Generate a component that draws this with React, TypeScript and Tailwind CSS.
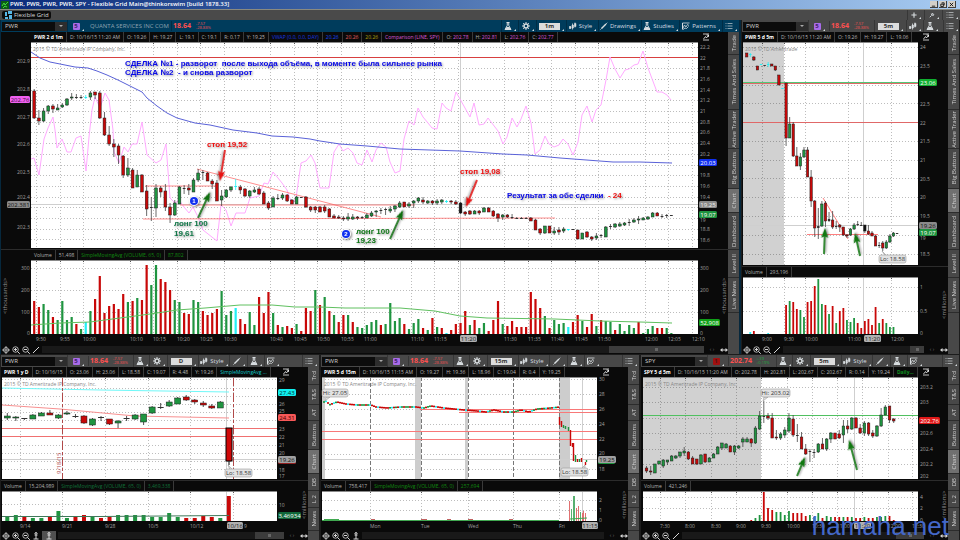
import { ReactNode, useState } from 'react';
import clsx from 'clsx';

const RED = '#c80808';
const GREEN = '#1f9440';
const COLORS: Record<string, string> = { r: RED, g: GREEN, c: '#22f0f5', k: '#111111', d: '#333333' };

/* ---------- data: "<kind> top bottom high low" per candle, "<kind><height>" per volume bar ---------- */

const MAIN_CANDLES = `r 91 118 89 119;r 118 121 110 125;g 111 121 108 122;g 106 111 105 114;r 106 109 104 113;g 108 110 104 110;g 105 107 103 108;g 99 105 98 106;g 97 98 93 100;d 97 98 94 99;d 97 98 95 99;c 97 98 95 99;g 93 97 91 100;r 92 95 92 99;r 93 118 91 119;r 118 135 112 136;r 135 144 126 146;r 144 147 139 157;r 146 155 144 164;r 156 175 155 178;g 168 175 158 177;r 170 188 168 188;g 175 187 170 187;r 175 192 174 192;r 191 209 185 216;d 207 208 197 221;g 188 208 184 217;r 188 192 186 197;r 191 207 184 211;r 207 215 203 223;g 203 215 200 216;g 187 204 186 204;d 188 189 185 194;r 188 190 184 195;g 180 192 178 192;g 173 180 169 182;d 172 173 170 180;r 173 181 172 181;r 181 184 179 189;r 183 201 180 201;g 196 200 190 206;g 190 197 189 198;g 187 190 186 192;c 186 187 179 190;r 187 190 185 194;r 189 196 188 197;g 191 196 190 198;g 190 192 187 193;r 189 194 187 195;r 193 204 191 204;r 203 208 201 210;g 198 207 196 207;d 198 199 194 200;g 195 198 193 200;r 195 201 194 202;r 200 204 199 204;g 197 204 196 204;d 197 198 197 198;r 197 207 196 208;r 207 210 206 212;r 207 210 206 213;r 207 212 206 212;r 207 211 205 213;r 209 217 208 217;r 216 218 214 218;r 217 218 215 219;r 218 219 216 221;g 217 219 213 221;g 217 219 214 220;r 217 218 216 220;d 217 218 216 219;g 215 218 213 218;g 213 216 211 217;g 211 212 210 217;d 210 211 208 214;d 209 210 208 215;g 209 211 206 213;g 206 209 205 212;g 203 207 201 208;r 202 207 202 207;g 204 206 202 208;g 201 203 200 208;g 198 201 197 203;r 200 202 197 204;g 201 203 200 204;r 201 203 200 205;g 201 203 199 205;g 200 202 199 204;c 201 202 200 203;r 201 202 200 204;r 202 204 200 205;k 203 213 202 214;r 212 214 211 216;r 211 214 210 215;g 211 214 210 214;r 211 213 210 215;g 208 212 207 212;r 208 212 207 212;r 211 216 210 217;r 214 218 213 222;g 215 217 214 220;r 215 217 214 218;d 217 218 214 219;d 218 219 217 219;d 218 219 217 219;d 218 219 217 219;r 218 221 217 221;r 220 230 219 230;r 229 233 228 235;g 226 233 226 234;r 226 233 226 233;g 231 233 227 235;r 230 232 227 235;g 229 231 227 233;c 229 230 229 231;d 229 230 229 230;r 230 239 230 239;g 233 239 233 239;r 232 237 231 238;r 237 239 236 241;g 236 238 233 240;d 235 236 234 238;g 227 237 226 237;d 226 227 224 229;g 224 227 223 228;g 224 226 222 227;g 223 225 222 226;d 222 223 219 226;g 220 222 218 223;g 219 220 216 224;g 218 220 217 220;g 217 219 216 220;g 213 217 212 217;r 213 216 212 216;d 216 217 214 218;d 215 216 214 218;d 215 216 215 216`;

const MAIN_VOLUME =
  'r33 r27 g30 g24 r17 g14 g33 g14 g17 r10 g5 c12 g23 r35 r58 r21 r28 r30 r25 r40 g32 r33 g36 r34 r69 g49 g69 r55 r52 r44 g34 g32 r21 r20 g34 g32 r23 r19 r21 r25 g43 g19 g23 c26 r15 r10 g22 g9 r37 r21 r42 g21 r9 g7 r8 r6 g10 r3 r26 r23 g44 r29 g37 r23 g19 r12 r19 g19 r12 g7 g6 g9 g12 g14 r9 g10 g31 g13 g16 r10 g5 g11 g15 r6 g4 r16 g7 r6 c1 r4 r10 r11 r23 g9 r14 g6 g11 r3 r14 r33 g10 r8 r13 r7 r7 r7 r42 r35 r26 g18 r6 g14 g10 g11 c7 r12 r19 g13 r7 r20 g8 r14 g13 g12 r4 g10 g3 g9 g6 r12 g1 g5 g8 r6 r6 g6 g1';

const COMPARISON =
  '31,159 34,158 39,175 44,139 48,128 53,117 55,130 57,148 62,139 67,152 71,152 76,138 81,136 86,171 89,137 92,110 95,97 100,108 105,93 109,100 113,130 114,152 119,163 124,147 128,152 132,144 137,144 142,122 147,155 156,163 161,160 166,144 170,198 175,203 179,200 184,207 189,213 193,207 198,217 203,230 217,241 221,205 226,210 231,226 236,213 245,213 250,198 259,196 264,183 268,184 273,172 278,178 282,183 287,190 292,204 296,198 301,163 306,161 311,155 315,163 320,188 329,188 334,152 339,144 343,151 348,148 353,153 357,163 362,165 367,150 372,162 376,150 381,143 386,147 390,162 395,173 400,171 404,139 409,121 414,125 418,108 423,117 428,123 432,128 437,129 442,103 446,108 451,111 456,92 460,99 465,108 470,117 474,103 479,125 484,124 488,118 498,131 503,144 507,137 512,118 517,127 521,119 526,106 531,123 535,154 540,150 545,136 549,144 554,147 559,145 563,139 568,144 573,155 578,142 582,115 587,106 592,122 596,110 601,105 606,80 610,57 615,69 620,78 625,70 629,69 634,65 638,64 643,51 648,68 657,92 662,92 667,95 671,100';

const VWAP =
  '31,52 40,58 50,62 60,64 75,67 88,68 97,71 107,75 118,80 130,86 142,92 147,98 157,106 167,113 177,118 195,123 210,125 233,130 257,133 272,136 293,137 310,139 320,141 340,144 367,146 400,149 460,151 503,154 527,155 560,158 613,162 640,162 672,163';

const MAIN_SMA =
  '31,325 60,323 90,322 120,318 150,314 177,310 205,308 240,305 272,305 295,307 320,307 345,308 400,308 435,311 460,316 487,318 555,319 600,321 640,322 672,323';

const FIVE_CANDLES = `r 53 57 53 57;c 54 55 53 57;r 57 60 56 61;r 66 70 66 70;c 64 65 64 65;d 65 66 65 66;c 64 65 62 67;r 64 66 64 66;r 66 70 66 71;r 75 85 75 85;c 88 89 88 89;r 83 138 83 146;g 124 138 117 138;r 124 156 122 157;r 156 166 147 166;g 157 166 153 170;g 150 157 147 158;r 150 177 147 177;r 177 201 170 207;r 201 228 200 237;d 226 228 208 239;g 204 226 201 227;r 203 221 201 227;d 219 221 212 222;r 220 227 211 229;d 226 227 221 229;r 225 227 224 232;r 227 235 227 236;r 235 236 234 238;g 229 235 228 236;g 225 229 223 230;d 224 225 221 226;d 225 226 222 226;k 225 231 225 233;r 231 234 225 235;r 233 236 231 236;r 236 246 235 246;d 245 246 242 248;r 243 248 241 251;g 242 248 240 249;g 236 242 234 243;g 233 236 232 237;d 233 234 233 234`;
const FIVE_VOLUME =
  'g0 c2 r3 g0 g0 g0 c1 g0 g0 g0 g0 r29 g33 r32 r25 g24 g17 r32 r33 r48 g55 g30 r29 g20 r28 g11 r23 r26 g14 g12 g16 r11 r6 r13 r15 r9 r27 g11 r15 g11 g7 g7';

const DAY_CANDLES = `g 416 418 413 420;g 417 418 416 421;d 418 419 418 420;g 415 419 414 419;g 413 416 412 416;r 413 415 410 415;g 415 418 414 419;g 413 414 411 415;d 416 417 414 418;r 416 423 415 424;g 419 425 418 426;d 417 418 416 421;r 419 424 419 425;g 421 423 420 428;d 418 419 416 421;g 415 419 414 420;g 414 422 414 425;g 407 413 406 414;d 407 408 403 409;g 402 406 400 407;g 398 404 397 404;r 397 400 395 401;r 400 402 399 404;r 403 405 401 407;r 406 408 404 409;g 402 408 401 408`;
const DAY_VOLUME = 'g4 g6 r4 g3 g3 r4 g10 g3 r4 r6 g4 r3 r4 g6 g6 g6 g6 g4 g4 g8 g4 r3 r3 r5 r4 g3 r25';

const SPY_CANDLES = `r 468 471 466 473;r 471 472 466 475;g 464 473 464 473;g 461 464 461 464;g 460 466 459 468;g 460 462 460 465;g 456 461 455 461;g 456 458 455 459;g 452 456 452 458;g 451 453 447 456;r 452 459 451 460;r 458 464 456 464;r 459 464 459 465;g 455 464 454 464;r 454 462 454 463;g 458 462 457 462;g 454 458 453 458;g 447 454 446 454;g 443 448 443 450;g 444 448 443 448;r 446 452 445 452;g 446 452 445 455;g 446 448 445 449;g 439 442 437 447;g 439 442 437 442;r 439 443 438 447;g 428 443 426 444;g 416 429 411 430;d 416 417 401 423;r 416 418 413 420;r 418 438 413 438;r 437 438 430 440;g 434 438 432 440;g 430 435 427 438;g 418 431 413 433;r 419 435 415 437;d 435 436 424 442;r 437 449 432 449;r 449 454 444 455;d 451 452 449 462;d 452 453 449 458;g 444 452 443 453;r 444 449 438 449;g 439 449 438 451;g 433 439 432 443;r 433 439 433 439;r 434 438 430 439;g 426 435 420 443;r 426 429 420 433;g 418 429 417 430;r 418 428 417 428;r 428 433 424 434;g 423 433 421 436;r 423 434 422 436;r 433 436 430 438;g 426 436 425 437;g 415 426 408 427;g 407 415 405 415;r 406 420 406 423;r 419 421 418 423`;
const SPY_VOLUME =
  'g0 g0 g0 g0 g0 g0 g0 g0 g0 g0 g0 g0 g0 g0 g0 g0 g0 g0 g0 g0 g0 g0 g0 g0 g0 r1 g3 g6 r29 r13 r11 g9 g9 g6 g10 r8 r8 r8 r5 g6 g4 g8 r3 g5 g4 r4 r4 g4 r4 g4 r3 r3 g4 r3 r3 g4 g4 g5 r5 r1';

/* ---------- chart pieces ---------- */

function Candles({ data, x0, step, width, wick = '#444' }: { data: string; x0: number; step: number; width: number; wick?: string }) {
  return (
    <g>
      {data.split(';').map((row, i) => {
        const [kind, ...v] = row.split(' ');
        const [top, bottom, high, low] = v.map(Number);
        const x = x0 + i * step;
        const flat = kind === 'c' || kind === 'd';
        return (
          <g key={i}>
            <line x1={x} x2={x} y1={high} y2={low} stroke={kind === 'c' ? COLORS.c : wick} strokeWidth="0.8" />
            <rect
              x={x - width / 2}
              y={top}
              width={width}
              height={Math.max(bottom - top, 1)}
              fill={COLORS[kind]}
              stroke={flat ? 'none' : '#1c1c1c'}
              strokeWidth="0.5"
            />
          </g>
        );
      })}
    </g>
  );
}

function VolumeBars({ data, x0, step, width, base }: { data: string; x0: number; step: number; width: number; base: number }) {
  return (
    <g>
      {data.split(' ').map((bar, i) => {
        const h = Number(bar.slice(1));
        return h > 0 && <rect key={i} x={x0 + i * step - width / 2} y={base - h} width={width} height={h} fill={COLORS[bar[0]]} />;
      })}
    </g>
  );
}

type Box = { left: number; right: number; top: number; bottom: number };

function Grid({ box, xs, ys }: { box: Box; xs: number[]; ys: number[] }) {
  return (
    <g stroke="#bdbdbd" strokeDasharray="1 2">
      {ys.map((y) => (
        <line key={y} x1={box.left} x2={box.right} y1={y + 0.5} y2={y + 0.5} />
      ))}
      {xs.map((x) => (
        <line key={x} x1={x + 0.5} x2={x + 0.5} y1={box.top} y2={box.bottom} />
      ))}
      {xs.map((x) => (
        <line key={`t${x}`} x1={x + 0.5} x2={x + 0.5} y1={box.top} y2={box.top + 2} stroke="#555" strokeDasharray="none" />
      ))}
    </g>
  );
}

function Plot({ box, xs, ys, children }: { box: Box; xs: number[]; ys: number[]; children?: ReactNode }) {
  return (
    <>
      <rect x={box.left} y={box.top} width={box.right - box.left} height={box.bottom - box.top} fill="#fff" />
      <Grid box={box} xs={xs} ys={ys} />
      {children}
      <path d={`M${box.left} ${box.top + 0.5}H${box.right}`} stroke="#8a8a8a" />
    </>
  );
}

function ScaleLabels({ x, items }: { x: number; items: [string, number][] }) {
  return (
    <g className="fill-[#a0a0a0] text-[5px]">
      {items.map(([label, y]) => (
        <text key={label} x={x} y={y + 2}>{label}</text>
      ))}
    </g>
  );
}

function TimeLabels({ y, items }: { y: number; items: [string, number][] }) {
  return (
    <g className="fill-[#a0a0a0] text-[5px]">
      {items.map(([label, x]) => (
        <text key={label} x={x} y={y}>{label}</text>
      ))}
    </g>
  );
}

function Tag({ x, y, w, fill, color = '#fff', children }: { x: number; y: number; w: number; fill: string; color?: string; children: string }) {
  return (
    <g>
      <rect x={x} y={y - 3} width={w} height={7} rx={1.5} fill={fill} />
      <text x={x + w / 2} y={y + 3} textAnchor="middle" fill={color} className="text-[6px]">{children}</text>
    </g>
  );
}

function Callout({ x, y, w, children }: { x: number; y: number; w: number; children: string }) {
  return (
    <g>
      <rect x={x} y={y} width={w} height={8} rx={2} fill="#e2e2e2" stroke="#9a9a9a" strokeWidth="0.6" />
      <text x={x + w / 2} y={y + 6} textAnchor="middle" className="fill-[#333] text-[6px]">{children}</text>
    </g>
  );
}

function Arrow({ from, to, color }: { from: [number, number]; to: [number, number]; color: string }) {
  const angle = (Math.atan2(to[1] - from[1], to[0] - from[0]) * 180) / Math.PI;
  const len = Math.hypot(to[0] - from[0], to[1] - from[1]);
  return (
    <g transform={`translate(${from[0]} ${from[1]}) rotate(${angle})`} fill={color} stroke={color} className="[filter:drop-shadow(1px_1px_1px_#0007)]">
      <line x1="0" y1="0" x2={len - 7} y2="0" strokeWidth="1.6" />
      <path d={`M${len} 0 L${len - 10} -3.4 L${len - 8} 0 L${len - 10} 3.4Z`} stroke="none" />
    </g>
  );
}

function Note({ x, y, fill, children }: { x: number; y: number; fill: string; children: ReactNode }) {
  return (
    <text x={x} y={y} fill={fill} className="whitespace-pre font-['Liberation_Sans',sans-serif] text-[8px] font-bold [filter:drop-shadow(1px_1px_1px_#0006)]">
      {children}
    </text>
  );
}

function Marker({ x, y, children }: { x: number; y: number; children: string }) {
  return (
    <g className="[filter:drop-shadow(1px_1px_1px_#0007)]">
      <circle cx={x} cy={y} r="5" fill="#fff" />
      <circle cx={x} cy={y} r="4" fill="#1030f0" />
      <text x={x} y={y + 2} textAnchor="middle" className="fill-white font-['Liberation_Sans',sans-serif] text-[6px] font-bold">{children}</text>
    </g>
  );
}

function Copyright({ x, y, children = '2015 © TD Ameritrade IP Company, Inc.' }: { x: number; y: number; children?: string }) {
  return <text x={x} y={y} className="fill-[#868686] text-[5px]">{children}</text>;
}

function Chart({ viewBox, label, children }: { viewBox: string; label: string; children: ReactNode }) {
  return (
    <svg viewBox={viewBox} role="img" aria-label={label} className="block h-auto w-full">
      {children}
    </svg>
  );
}

/* ---------- icons ---------- */

function Icon({ children, className = 'size-2', label }: { children: ReactNode; className?: string; label?: string }) {
  return (
    <svg viewBox="0 0 16 16" className={clsx('shrink-0', className)} fill="none" stroke="currentColor" strokeWidth="2" aria-label={label} aria-hidden={!label}>
      {children}
    </svg>
  );
}

const Flask = () => (
  <Icon><path d="M5 1h6M6.500 1v6L2 15h12L9.500 7V1" /><path d="M5 10h6l2 5H3z" fill="currentColor" stroke="none" /></Icon>
);
const Gear = () => (
  <Icon>
    <circle cx="8" cy="8" r="4" strokeWidth="3" />
    <path d="M8 0v3M8 13v3M0 8h3M13 8h3M2.300 2.300l2 2M11.700 11.700l2 2M13.700 2.300l-2 2M4.300 11.700l-2 2" />
  </Icon>
);
const Sticks = () => (
  <Icon><path d="M2 8v6M7 3v12M12 1v10" strokeWidth="1.500" /><path d="M1 9h3v4H1zM6 6h3v6H6zM11 3h3v6h-3z" fill="currentColor" strokeWidth="1" /></Icon>
);
const Pencil = () => (
  <Icon><path d="M3 13L12 4" strokeWidth="3" /><path d="M12.500 3.500l2-2M1 15l2-2" /></Icon>
);
const Slash = () => (
  <Icon><path d="M2 14L14 2" strokeWidth="2" /></Icon>
);
const Waves = () => (
  <Icon><path d="M1 2h14M2 12l3-6 3 4 3-5 3 2M2 15l4-3 3 1 4-4" strokeWidth="1.600" /><path d="M1 2v13" /></Icon>
);
const Menu = () => (
  <Icon><path d="M1 3h2M5 3h10M1 8h2M5 8h10M1 13h2M5 13h10" strokeWidth="1.600" opacity="0.8" /></Icon>
);
const Cross = () => (
  <Icon><circle cx="8" cy="8" r="5" strokeWidth="1.500" /><path d="M8 0v16M0 8h16" strokeWidth="1.500" /></Icon>
);
const Zoom = ({ plus }: { plus?: boolean }) => (
  <Icon><circle cx="7" cy="7" r="5.500" strokeWidth="1.600" /><path d="M11 11l4.500 4.500M4 7h6" />{plus && <path d="M7 4v6" />}</Icon>
);
const Anchor = () => (
  <Icon><path d="M8 1v13M5 3l3-2 3 2M5 6h6M3 14h10" /></Icon>
);
const Expand = () => (
  <Icon><path d="M2 2h12M2 14h12M3 12l4-5 2 3 4-6M13 8V4H9" strokeWidth="1.500" /></Icon>
);
const Span = () => (
  <Icon><path d="M0 8l5-4v8zM16 8l-5-4v8z" fill="currentColor" stroke="none" /><path d="M3 8h10" /></Icon>
);

/* ---------- panel chrome ---------- */

function Tool({ label, className, children }: { label: string; className: string; children: ReactNode }) {
  return (
    <button type="button" aria-label={label} className={clsx('flex h-full shrink-0 items-center justify-center gap-[2px] border-l border-black/25 text-[#d8dde0]', className)}>
      {children}
      <svg viewBox="0 0 2 2" className="mb-[1px] size-[2px] shrink-0 self-end" aria-hidden="true"><path d="M2 0v2H0z" fill="currentColor" /></svg>
    </button>
  );
}

function TimeFrame({ value, className }: { value: string; className: string }) {
  return (
    <Tool label={`Time frame ${value}`} className={className}>
      <span className="w-[21px] bg-[#dcdcdc] text-center text-[6px] leading-[7px] font-bold text-[#333]">{value}</span>
    </Tool>
  );
}

function SymbolBox({ id, symbol }: { id: string; symbol: string }) {
  return (
    <div className="ml-[1px] flex h-[9px] w-[65px] shrink-0 items-center bg-[#0c0c0c]">
      <select id={id} aria-label="Symbol" defaultValue={symbol} className="h-full min-w-0 flex-1 appearance-none bg-transparent pl-[3px] text-[6px] leading-[9px] text-[#d0d0d0]">
        <option>{symbol}</option>
      </select>
      <span className="flex h-full w-3 items-center justify-center bg-[#2d2d2d]">
        <svg viewBox="0 0 4 2" className="h-[2px] w-1" aria-hidden="true"><path d="M0 0h4L2 2z" fill="#aaa" /></svg>
      </span>
    </div>
  );
}

type Quote = { symbol: string; badge: string; name?: string; last: string; change: string; percent: string; up?: boolean };

function QuoteBar({ id, quote }: { id: string; quote: Quote }) {
  return (
    <>
      <SymbolBox id={id} symbol={quote.symbol} />
      <Tool label="Link colour" className="w-[21px]">
        <span className={clsx('w-[7px] rounded-[1px] text-center text-[6px] leading-[7px] font-bold', quote.up ? 'bg-[#a01010] text-[#501010]' : 'bg-[#a86be8] text-[#40206a]')}>
          {quote.badge}
        </span>
      </Tool>
      {quote.name && <span className="shrink-0 pr-[2px] pl-[2px] text-[6px] text-[#8fa3b0]">{quote.name}</span>}
      <strong className="min-w-[23px] shrink-0 border-l border-black/25 pr-[2px] pl-[1px] text-[7px] font-bold text-[#ff5050]">{quote.last}</strong>
      <span className={clsx('flex w-[22px] shrink-0 flex-col pl-[2px] text-[4px] leading-[4px]', quote.up ? 'text-[#20a840]' : 'text-[#f05050]')}>
        <span>{quote.change}</span>
        <span>{quote.percent}</span>
      </span>
    </>
  );
}

type Cell = { text: string; value?: string; className?: string; valueClassName?: string };

function Strip({ cells, indent, action }: { cells: Cell[]; indent?: boolean; action?: boolean }) {
  return (
    <div className={clsx('flex h-[10px] bg-[#0a0a0a] text-[#b0b0b0]', indent && 'pl-[30px]')}>
      <div className="flex min-w-0 flex-1 overflow-hidden">
        {cells.map((cell, i) => (
          <span key={i} className={clsx('shrink-0 border-r border-[#3a3a3a] px-[3px] text-[5px] leading-[10px] whitespace-nowrap', cell.className)}>
            {cell.text}
            {cell.value && <span className={cell.valueClassName}> {cell.value}</span>}
          </span>
        ))}
      </div>
      <div className="flex w-[30px] shrink-0 items-center pl-1 text-white">
        {action && <button type="button" aria-label="Chart settings"><Expand /></button>}
      </div>
    </div>
  );
}

function SideTabs({ tabs }: { tabs: [string, string][] }) {
  const [active, setActive] = useState('Chart');
  return (
    <nav className="flex w-[11px] shrink-0 flex-col bg-[#484848]">
      {tabs.map(([label, height]) => (
        <button
          key={label}
          type="button"
          onClick={() => setActive(label)}
          className={clsx(
            'flex w-full items-center justify-center border-b border-[#2c2c2c] text-[6px] text-[#d0d0d0]',
            height,
            label === active && 'bg-[#707070]',
          )}
        >
          <span className="rotate-180 leading-[8px] whitespace-nowrap [writing-mode:vertical-rl]">{label}</span>
        </button>
      ))}
    </nav>
  );
}

const LONG_TABS: [string, string][] = [
  ['Trade', 'h-[23px]'],
  ['Times And Sales', 'h-[55px]'],
  ['Active Trader', 'h-[39px]'],
  ['Big Buttons', 'h-[40px]'],
  ['Chart', 'h-6'],
  ['Dashboard', 'h-[37px]'],
  ['Level II', 'h-7'],
  ['Live News', 'h-[35px]'],
];

const SHORT_TABS: [string, string][] = [
  ['Trd', 'h-[18px]'],
  ['T&S', 'h-5'],
  ['AT', 'h-4'],
  ['Buttons', 'h-[29px]'],
  ['Chart', 'h-6'],
  ['DB', 'h-[17px]'],
  ['L 2', 'h-[17px]'],
  ['News', 'h-[23px]'],
];

function Footer({ fourth, thumb, pinned }: { fourth: ReactNode; thumb?: string; pinned?: boolean }) {
  return (
    <div className="flex h-[9px] items-center gap-[2px] bg-[#0a0a0a] pl-[1px] text-[#d8d8d8]">
      <button type="button" aria-label="Crosshair"><Cross /></button>
      <button type="button" aria-label="Zoom in"><Zoom plus /></button>
      <button type="button" aria-label="Zoom out"><Zoom /></button>
      <button type="button" aria-label="Draw">{fourth}</button>
      {pinned && <span className="flex h-full w-[14px] items-center justify-center bg-[#505050]"><Anchor /></span>}
      <div className="flex h-[7px] flex-1 justify-end bg-[#191919]">
        {thumb && (
          <span className={clsx('flex items-center justify-center bg-[#3c3c3c]', thumb)}>
            <span className="h-[3px] w-[3px] bg-[#666]" />
          </span>
        )}
      </div>
      <span className="w-[12px] text-center text-[5px] leading-[9px] text-[#777]">‹ ›</span>
      <button type="button" aria-label="Fit"><Span /></button>
    </div>
  );
}

function Panel({ toolbar, tabs, active, children }: { toolbar: ReactNode; tabs: [string, string][]; active?: boolean; children: ReactNode }) {
  return (
    <section className={clsx('flex min-w-0 flex-col border-l', active ? 'border-r-2 border-[#06283d] bg-[#06283d]' : 'border-r border-[#1c1c1c] bg-[#1c1c1c]')}>
      <div className={clsx('flex h-3 items-center overflow-hidden', active ? 'bg-[#003c5c]' : 'bg-[#484848]')}>{toolbar}</div>
      <div className="flex flex-1">
        <div className="flex min-w-0 flex-1 flex-col bg-[#0a0a0a]">{children}</div>
        <SideTabs tabs={tabs} />
      </div>
    </section>
  );
}

const ohlc = (values: string[], valueClassName = 'text-[#b8b8b8]'): Cell[] =>
  values.map((v) => {
    const [text, ...rest] = v.split(' ');
    return { text, value: rest.join(' '), valueClassName };
  });

/* ---------- panels ---------- */

function MainPanel() {
  const xs = [36, 60, 83, 130, 153, 177, 200, 224, 270, 294, 317, 341, 364, 411, 434, 458, 504, 528, 551, 575, 598, 645, 668, 692];
  const ys = [47, 57, 68, 79, 90, 100, 111, 122, 132, 143, 154, 165, 175, 186, 197, 207, 218, 229, 239];
  const price: Box = { left: 31, right: 698, top: 42, bottom: 248 };
  const volume: Box = { left: 31, right: 698, top: 260, bottom: 334 };
  return (
    <Panel
      active
      tabs={LONG_TABS}
      toolbar={
        <>
          <QuoteBar id="symbol-main" quote={{ symbol: 'PWR', badge: '5', name: 'QUANTA SERVICES INC COM', last: '18.64', change: '-7.57', percent: '-28.88%' }} />
          <span className="flex-1" />
          <Tool label="Analysis" className="w-[17px]"><Flask /></Tool>
          <Tool label="Settings" className="w-[18px]"><Gear /></Tool>
          <TimeFrame value="1m" className="w-[30px]" />
          <Tool label="Style" className="w-8"><Sticks /><span className="text-[6px]">Style</span></Tool>
          <Tool label="Drawings" className="w-[43px]"><Pencil /><span className="text-[6px]">Drawings</span></Tool>
          <Tool label="Studies" className="w-[38px]"><Flask /><span className="text-[6px]">Studies</span></Tool>
          <Tool label="Patterns" className="w-[43px]"><Waves /><span className="text-[6px]">Patterns</span></Tool>
          <Tool label="Menu" className="w-[17px]"><Menu /></Tool>
        </>
      }
    >
      <Strip
        indent
        action
        cells={[
          { text: 'PWR 2 d 1m', className: 'font-bold text-white' },
          ...ohlc(['D: 10/16/15 11:20 AM', 'O: 19.26', 'H: 19.27', 'L: 19.1', 'C: 19.1', 'R: 0.17', 'Y: 19.25']),
          { text: 'VWAP (0.0, 0.0, DAY)', className: 'text-[#1838e0]' },
          { text: '20.26', className: 'text-[#1848f8]' },
          { text: '20.26', className: 'text-[#e06060]' },
          { text: '20.26', className: 'text-[#b0a010]' },
          { text: 'Comparison (LINE, SPY)', className: 'text-[#d858d8]' },
          ...ohlc(['O: 202.78', 'H: 202.81', 'L: 202.76', 'C: 202.77'], 'text-[#d858d8]'),
        ]}
      />
      <Chart viewBox="1 42 727 207" label="PWR one minute price">
        <Plot box={price} xs={xs} ys={ys}>
          <path d="M31 204.500H698M460.500 42V248" stroke="#cfcfcf" />
          <Copyright x={33} y={51} />
          <path d="M31 57.500H698" stroke="#d84040" />
          <polyline points={COMPARISON} fill="none" stroke="#ffaaff" />
          <polyline points={VWAP} fill="none" stroke="#5a62d8" />
          <path d="M145 186H217M143 219L555 218M180 205H415M197 169L320 201L381 217" stroke="#ff6060" opacity="0.7" fill="none" />
          <Candles data={MAIN_CANDLES} x0={34.2} step={4.685} width={2.8} />
        </Plot>
        <Note x={125} y={66} fill="#0808e8">{'СДЕЛКА №1 - разворот  после выхода объёма, в моменте была сильнее рынка'}</Note>
        <Note x={125} y={75} fill="#0808e8">{'СДЕЛКА №2  - и снова разворот'}</Note>
        <Note x={207} y={147} fill="#f01010">стоп 19,52</Note>
        <Arrow from={[225, 150]} to={[220, 181]} color="#e81010" />
        <Marker x={194} y={201}>1</Marker>
        <Arrow from={[198, 218]} to={[210, 192]} color="#107010" />
        <Note x={174} y={226} fill="#107848">лонг 100</Note>
        <Note x={174} y={236} fill="#107848">19,61</Note>
        <Note x={460} y={174} fill="#f01010">стоп 19,08</Note>
        <Arrow from={[477, 180]} to={[466, 207]} color="#e81010" />
        <Marker x={346} y={234}>2</Marker>
        <Note x={356} y={234} fill="#107818">лонг 100</Note>
        <Note x={356} y={243} fill="#107818">19,23</Note>
        <Arrow from={[390, 239]} to={[403, 210]} color="#107010" />
        <Note x={507} y={198} fill="#0808e8">
          {'Результат за обе сделки  '}
          <tspan fill="#f01010">- 24</tspan>
        </Note>
        <ScaleLabels x={17} items={[['202.9', 61], ['202.8', 89], ['202.7', 117], ['202.6', 144], ['202.5', 172], ['202.4', 197], ['202.3', 227]]} />
        <Tag x={10} y={99} w={20} fill="#f060f0" color="#401040">202.76</Tag>
        <Tag x={7} y={204} w={23} fill="#8a8a8a" color="#111">202.381</Tag>
        <ScaleLabels
          x={700}
          items={[['22.2', 47], ['22', 58], ['21.8', 68], ['21.6', 79], ['21.4', 90], ['21.2', 100], ['21', 111], ['20.8', 122], ['20.6', 132], ['20.4', 143], ['20.2', 154], ['19.8', 175], ['19.6', 186], ['19.4', 197], ['19', 220], ['18.8', 229], ['18.6', 240]]}
        />
        <Tag x={699} y={162} w={18} fill="#1030f0">20.03</Tag>
        <Tag x={699} y={204} w={18} fill="#8a8a8a" color="#eee">19.25</Tag>
        <Tag x={699} y={214} w={18} fill="#1f9440">19.07</Tag>
      </Chart>
      <div className="border-t border-[#2c2c2c]">
        <Strip
          indent
          cells={[{ text: 'Volume' }, { text: '51,498' }, { text: 'SimpleMovingAvg (VOLUME, 65, 0)', className: 'text-[#108810]' }, { text: '87,802', className: 'text-[#108810]' }]}
        />
      </div>
      <Chart viewBox="1 260 727 85" label="PWR one minute volume">
        <Plot box={volume} xs={xs} ys={[268, 290, 312]}>
          <path d="M460.500 260V334" stroke="#cfcfcf" />
          <VolumeBars data={MAIN_VOLUME} x0={34.2} step={4.685} width={2.2} base={334} />
          <polyline points={MAIN_SMA} fill="none" stroke="#60c060" />
        </Plot>
        <ScaleLabels x={21} items={[['300', 268], ['200', 290], ['100', 312]]} />
        <ScaleLabels x={27} items={[['0', 333]]} />
        <ScaleLabels x={700} items={[['300', 268], ['200', 290], ['100', 312], ['0', 333]]} />
        <Tag x={699} y={322} w={21} fill="#10a018">52,908</Tag>
        <g className="fill-[#8c8c8c] text-[6px]">
          <text transform="translate(7 314) rotate(-90)">&lt;thousands&gt;</text>
          <text transform="translate(726 314) rotate(-90)">&lt;thousands&gt;</text>
        </g>
        <TimeLabels
          y={341}
          items={[['9:50', 36], ['9:55', 60], ['10:00', 83], ['10:10', 130], ['10:15', 153], ['10:20', 177], ['10:25', 200], ['10:30', 224], ['10:40', 270], ['10:45', 294], ['10:50', 317], ['10:55', 341], ['11:00', 364], ['11:10', 411], ['11:15', 434], ['11:30', 504], ['11:35', 528], ['11:40', 551], ['11:45', 575], ['11:50', 598], ['12:00', 645], ['12:05', 668], ['12:10', 692]]}
        />
        <Tag x={460} y={338} w={17} fill="#b0b0b0" color="#222">11:20</Tag>
      </Chart>
      <Footer fourth={<Slash />} thumb="w-[95px]" />
    </Panel>
  );
}

function FiveMinutePanel() {
  const xs = [762, 784, 805, 848, 891];
  const price: Box = { left: 743, right: 918, top: 42, bottom: 265 };
  const volume: Box = { left: 743, right: 918, top: 277, bottom: 334 };
  return (
    <Panel
      tabs={LONG_TABS}
      toolbar={
        <>
          <QuoteBar id="symbol-five" quote={{ symbol: 'PWR', badge: '5', last: '18.64', change: '-7.57', percent: '-28.88%' }} />
          <TimeFrame value="5m" className="w-8" />
          <Tool label="Style" className="w-[17px]"><Sticks /></Tool>
          <Tool label="Studies" className="w-[17px]"><Flask /></Tool>
          <span className="flex-1" />
          <Tool label="Menu" className="w-4"><Menu /></Tool>
        </>
      }
    >
      <Strip action cells={[{ text: 'PWR 5 d 5m', className: 'font-bold text-white' }, ...ohlc(['D: 10/16/15 11:20 AM', 'O: 19.26', 'H: 19.27', 'L: 19.06'])]} />
      <Chart viewBox="742 42 206 224" label="PWR five minute price">
        <Plot box={price} xs={xs} ys={[47, 66, 85, 103, 122, 141, 160, 178, 197, 216, 235, 254]}>
          <rect x="743" y="43" width="41" height="222" fill="#000" opacity="0.18" />
          <path d="M743 225.500H918M863.500 42V265" stroke="#cfcfcf" />
          <Copyright x={745} y={51}>2015 © TD Ameritrade</Copyright>
          <path d="M743 82.500H918" stroke="#50c878" />
          <path d="M743 83.500H918M743 122.500H918" stroke="#e06868" />
          <path d="M807 234.500H878M823 198L848 239" stroke="#ff6060" opacity="0.8" />
          <Candles data={FIVE_CANDLES} x0={746.7} step={3.58} width={2.4} />
        </Plot>
        <Arrow from={[824, 254]} to={[825, 228]} color="#107810" />
        <Arrow from={[860, 256]} to={[855, 233]} color="#107810" />
        <path d="M882 251l4 6h2z" fill="#e2e2e2" stroke="#9a9a9a" strokeWidth="0.6" />
        <Callout x={879} y={255} w={27}>Lo: 18.58</Callout>
        <ScaleLabels x={920} items={[['24', 47], ['23.5', 66], ['22.5', 104], ['22', 123], ['21.5', 141], ['21', 160], ['20.5', 179], ['20', 197], ['19.5', 216], ['19', 238], ['18.5', 254]]} />
        <Tag x={919} y={82} w={18} fill="#10b030">23.06</Tag>
        <Tag x={919} y={225} w={18} fill="#8a8a8a" color="#111">19.26</Tag>
        <Tag x={919} y={232} w={18} fill="#1f9440">19.07</Tag>
      </Chart>
      <div className="border-t border-[#2c2c2c]">
        <Strip cells={[{ text: 'Volume' }, { text: '293,196' }]} />
      </div>
      <Chart viewBox="742 277 206 68" label="PWR five minute volume">
        <Plot box={volume} xs={xs} ys={[287, 311]}>
          <path d="M863.500 277V334" stroke="#cfcfcf" />
          <VolumeBars data={FIVE_VOLUME} x0={746.7} step={3.58} width={1.8} base={334} />
        </Plot>
        <ScaleLabels x={920} items={[['1', 287], ['0.5', 311], ['0', 333]]} />
        <text transform="translate(946 319) rotate(-90)" className="fill-[#8c8c8c] text-[6px]">&lt;millions&gt;</text>
        <TimeLabels y={341} items={[['9:00', 762], ['9:30', 784], ['10:00', 805], ['11:00', 848], ['12:00', 891]]} />
        <Tag x={864} y={338} w={17} fill="#b0b0b0" color="#222">11:20</Tag>
      </Chart>
      <Footer fourth={<Slash />} thumb="w-[14px]" />
    </Panel>
  );
}

function CompactTools({ id, quote, frame }: { id: string; quote: Quote; frame: string }) {
  return (
    <>
      <QuoteBar id={id} quote={quote} />
      <Tool label="Analysis" className="w-4"><Flask /></Tool>
      <Tool label="Settings" className="w-[18px]"><Gear /></Tool>
      <TimeFrame value={frame} className="w-[31px]" />
      <Tool label="Style" className="w-[31px]"><Sticks /><span className="text-[6px]">Style</span></Tool>
      <Tool label="Drawings" className="w-[18px]"><Pencil /></Tool>
      <Tool label="Studies" className="w-[17px]"><Flask /></Tool>
      <Tool label="Patterns" className="w-[17px]"><Waves /></Tool>
      <span className="flex-1" />
      <Tool label="Menu" className="w-[17px]"><Menu /></Tool>
    </>
  );
}

function DailyPanel() {
  const xs = [20, 62, 105, 148, 190, 233];
  const price: Box = { left: 2, right: 277, top: 377, bottom: 479 };
  const volume: Box = { left: 2, right: 277, top: 491, bottom: 521 };
  return (
    <Panel tabs={SHORT_TABS} toolbar={<CompactTools id="symbol-daily" frame="D" quote={{ symbol: 'PWR', badge: '5', last: '18.64', change: '-7.57', percent: '-28.88%' }} />}>
      <Strip
        action
        cells={[
          { text: 'PWR 1 y D', className: 'font-bold text-white' },
          ...ohlc(['D: 10/16/15', 'O: 23.06', 'H: 23.06', 'L: 18.58', 'C: 19.07', 'R: 4.48', 'Y: 19.26']),
          { text: 'SimpleMovingAvg ...', className: 'text-[#10c8c8]' },
        ]}
      />
      <Chart viewBox="1 377 307 103" label="PWR daily price">
        <Plot box={price} xs={xs} ys={[379, 388, 396, 404, 412, 420, 445, 453, 461, 469]}>
          <path d="M2 459.500H277M226.500 377V479" stroke="#cfcfcf" />
          <Copyright x={4} y={386} />
          <polyline points="2,388 100,390 229,392" fill="none" stroke="#70f8f8" />
          <polyline points="2,405 60,409 135,416 229,418" fill="none" stroke="#f89090" />
          <path d="M2 428.500H277M2 436.500H277" stroke="#f07070" />
          <path d="M62.500 377V479M233.500 377V479" stroke="#b04848" strokeDasharray="9 2 3 2" />
          <text transform="translate(61 474) rotate(-90)" className="fill-[#b04848] text-[6px]">9/18/15</text>
          <Candles data={DAY_CANDLES} x0={7.3} step={8.52} width={6} wick="#222" />
          <path d="M229 461V465" stroke="#000" />
          <rect x="226" y="428" width="6" height="33" fill="#d00808" stroke="#000" />
        </Plot>
        <path d="M228 465l2 5h3z" fill="#e2e2e2" stroke="#9a9a9a" strokeWidth="0.6" />
        <Callout x={225} y={469} w={27}>Lo: 18.58</Callout>
        <ScaleLabels x={279} items={[['29', 380], ['26', 404], ['25', 411], ['23', 429], ['22', 437], ['21', 445], ['20', 453], ['18', 470], ['17', 476]]} />
        <Tag x={278} y={392} w={18} fill="#10f0f0" color="#033">27.43</Tag>
        <Tag x={278} y={417} w={18} fill="#f85858" color="#400">24.31</Tag>
        <rect x={278} y={458} width={18} height={6} rx={1.5} fill="#902020" />
        <Tag x={278} y={459} w={18} fill="#a0a0a0" color="#111">19.26</Tag>
      </Chart>
      <div className="border-t border-[#2c2c2c]">
        <Strip
          cells={[{ text: 'Volume' }, { text: '15,204,989' }, { text: 'SimpleMovingAvg (VOLUME, 65, 0)', className: 'text-[#107038]' }, { text: '3,469,338', className: 'text-[#107038]' }]}
        />
      </div>
      <Chart viewBox="1 491 307 40" label="PWR daily volume">
        <Plot box={volume} xs={xs} ys={[504]}>
          <path d="M226.500 491V521" stroke="#cfcfcf" />
          <VolumeBars data={DAY_VOLUME} x0={7.3} step={8.52} width={4} base={521} />
          <path d="M2 516.500H100L229 515.500" stroke="#40785a" fill="none" />
        </Plot>
        <ScaleLabels x={279} items={[['10', 505]]} />
        <Tag x={278} y={515} w={23} fill="#10683a">3.46934</Tag>
        <text transform="translate(306 519) rotate(-90)" className="fill-[#8c8c8c] text-[6px]">&lt;millions&gt;</text>
        <TimeLabels y={528} items={[['9/14', 20], ['9/21', 62], ['9/28', 105], ['10/5', 148], ['10/12', 190]]} />
        <TimeLabels y={528} items={[['9', 244]]} />
        <Tag x={227} y={525} w={16} fill="#b0b0b0" color="#222">10/16</Tag>
      </Chart>
      <Footer fourth={<Anchor />} thumb="w-[29px]" pinned />
    </Panel>
  );
}

const WEEK = [
  [323, 402], [326, 401], [328, 405], [336, 402], [345, 404], [356, 405], [370, 405], [375, 407], [386, 408], [400, 407],
  [415, 407], [423, 408], [430, 406], [443, 408], [453, 409], [463, 410], [476, 411], [485, 412], [493, 410], [503, 412],
  [513, 412], [520, 410], [528, 412], [536, 409], [550, 408], [559, 407],
];

function weekDashes() {
  const out: { x: number; y: number; kind: string }[] = [];
  for (let x = 323; x < 559; x += 2) {
    const i = WEEK.findIndex((p) => p[0] > x);
    const [a, b] = [WEEK[i - 1], WEEK[i]];
    const y = a[1] + ((b[1] - a[1]) * (x - a[0])) / (b[0] - a[0]);
    const n = (x * 7) % 11;
    out.push({ x, y: y - 0.8, kind: n > 8 ? 'c' : n % 2 ? 'r' : b[1] > a[1] ? 'r' : 'g' });
  }
  return out;
}

function WeekPanel() {
  const price: Box = { left: 322, right: 597, top: 377, bottom: 479 };
  const volume: Box = { left: 322, right: 597, top: 491, bottom: 521 };
  return (
    <Panel tabs={SHORT_TABS} toolbar={<CompactTools id="symbol-week" frame="15m" quote={{ symbol: 'PWR', badge: '5', last: '18.64', change: '-7.57', percent: '-28.88%' }} />}>
      <Strip
        action
        cells={[
          { text: 'PWR 5 d 15m', className: 'font-bold text-white' },
          ...ohlc(['D: 10/16/15 11:15 AM', 'O: 19.27', 'H: 19.36', 'L: 18.96', 'C: 19.04', 'R: 0.4', 'Y: 19.25']),
        ]}
      />
      <Chart viewBox="321 377 307 103" label="PWR fifteen minute price">
        <Plot box={price} xs={[]} ys={[379, 394, 409, 424, 439, 454, 469]}>
          <path d="M322 378h3v101h-3zM415 378h6v101h-6zM465 378h3v101h-3zM559 378h11v101h-11z" fill="#cdcdcd" />
          <path d="M322 459.500H597M582.500 377V479" stroke="#cfcfcf" />
          <Copyright x={324} y={386} />
          <path d="M370.500 377V479M421.500 377V479M468.500 377V479M513.500 377V479M559.500 377V479" stroke="#777" strokeDasharray="4 2" />
          <path d="M322 431.500H597M322 439.500H597M420 409.500H597M459 412.500H597" stroke="#f87878" />
          {weekDashes().map((d) => (
            <rect key={d.x} x={d.x} y={d.y} width="2" height="1.600" fill={COLORS[d.kind]} />
          ))}
          <path d="M559.500 417V425M561.500 421V427M570.500 430V446M573.500 443V461M572.500 443V447M577.500 459V462M581.500 458V462M585.500 462V465" stroke={RED} strokeWidth="1.400" />
          <path d="M563.500 425V428M565.500 426V429M568.500 427V431M575.500 455V462M579.500 459V462M586.500 460V462" stroke={GREEN} strokeWidth="1.400" />
        </Plot>
        <path d="M325 401l1 -4h4z" fill="#e2e2e2" stroke="#9a9a9a" strokeWidth="0.6" />
        <Callout x={322} y={389} w={26}>Hi: 27.05</Callout>
        <path d="M585 465l-4 4h4z" fill="#e2e2e2" stroke="#9a9a9a" strokeWidth="0.6" />
        <Callout x={561} y={468} w={27}>Lo: 18.58</Callout>
        <ScaleLabels x={599} items={[['30', 379], ['28', 394], ['26', 409], ['24', 424], ['22', 439], ['20', 453], ['18', 469]]} />
        <rect x={598} y={458} width={17} height={6} rx={1.5} fill="#1f9440" />
        <Tag x={598} y={459} w={18} fill="#a0a0a0" color="#111">19.25</Tag>
      </Chart>
      <div className="border-t border-[#2c2c2c]">
        <Strip
          cells={[{ text: 'Volume' }, { text: '758,417' }, { text: 'SimpleMovingAvg (VOLUME, 65, 0)', className: 'text-[#108810]' }, { text: '257,694', className: 'text-[#108810]' }]}
        />
      </div>
      <Chart viewBox="321 491 307 40" label="PWR fifteen minute volume">
        <Plot box={volume} xs={[370, 421, 468, 513, 559]} ys={[500, 510]}>
          <path d="M582.500 491V521" stroke="#cfcfcf" />
          <path d="M322 520.500H559M324 519.500H339" stroke="#40a850" />
          <path d="M371 519.500h4M421 519.500h6M447 519.500h4M468 519.500h5M509 519.500h4" stroke="#c06060" />
          <path d="M569.500 501V521M576.500 508V521M578.500 506V521M582.500 513V521M583.500 511V521M585.500 513V521" stroke="#e07070" />
          <path d="M571.500 509V521M573.500 496V521M574.500 496V521M580.500 512V521" stroke="#58b070" />
          <path d="M570 519L587 518" stroke="#40a850" />
        </Plot>
        <ScaleLabels x={599} items={[['2', 500], ['1', 510], ['0', 520]]} />
        <text transform="translate(626 519) rotate(-90)" className="fill-[#8c8c8c] text-[6px]">&lt;millions&gt;</text>
        <TimeLabels y={528} items={[['Mon', 370], ['Tue', 421], ['Wed', 468], ['Thu', 513], ['Fri', 559]]} />
        <Tag x={582} y={525} w={16} fill="#b0b0b0" color="#222">11:15</Tag>
      </Chart>
      <Footer fourth={<Anchor />} />
    </Panel>
  );
}

function SpyPanel() {
  const xs = [660, 685, 711, 736, 761, 787, 812, 837, 862, 888, 912];
  const price: Box = { left: 643, right: 918, top: 377, bottom: 479 };
  const volume: Box = { left: 643, right: 918, top: 491, bottom: 521 };
  return (
    <Panel tabs={SHORT_TABS} toolbar={<CompactTools id="symbol-spy" frame="5m" quote={{ symbol: 'SPY', badge: '1', last: '202.74', change: '+.39', percent: '+0.19%', up: true }} />}>
      <Strip
        action
        cells={[
          { text: 'SPY 5 d 5m', className: 'font-bold text-white' },
          ...ohlc(['D: 10/16/15 11:20 AM', 'O: 202.78', 'H: 202.81', 'L: 202.67', 'C: 202.67', 'R: 0.14', 'Y: 19.24']),
          { text: 'Daily...', className: 'font-bold text-[#109020]' },
        ]}
      />
      <Chart viewBox="641 377 307 103" label="SPY five minute price">
        <Plot box={price} xs={xs} ys={[387, 402, 418, 433, 449, 464]}>
          <rect x="643" y="378" width="118" height="101" fill="#000" opacity="0.18" />
          <path d="M854.500 377V479" stroke="#cfcfcf" />
          <Copyright x={645} y={386} />
          <path d="M643 415.500H918" stroke="#50c060" />
          <Candles data={SPY_CANDLES} x0={646.5} step={4.19} width={2.6} />
        </Plot>
        <path d="M763 401l1 -4h4z" fill="#e2e2e2" stroke="#9a9a9a" strokeWidth="0.6" />
        <Callout x={761} y={389} w={29}>Hi: 203.02</Callout>
        <Arrow from={[797, 476]} to={[805, 457]} color="#107810" />
        <Arrow from={[857, 470]} to={[849, 440]} color="#107810" />
        <ScaleLabels x={920} items={[['203.2', 387], ['203', 402], ['202.6', 433], ['202.4', 449], ['202.2', 464], ['202', 476]]} />
        <Tag x={919} y={420} w={21} fill="#e01818">202.76</Tag>
      </Chart>
      <div className="border-t border-[#2c2c2c]">
        <Strip cells={[{ text: 'Volume' }, { text: '421,246' }]} />
      </div>
      <Chart viewBox="641 491 307 40" label="SPY five minute volume">
        <Plot box={volume} xs={xs} ys={[497, 508]}>
          <path d="M854.500 491V521" stroke="#cfcfcf" />
          <VolumeBars data={SPY_VOLUME} x0={646.5} step={4.19} width={1.8} base={521} />
        </Plot>
        <ScaleLabels x={920} items={[['4', 497], ['2', 508], ['0', 520]]} />
        <text transform="translate(946 519) rotate(-90)" className="fill-[#8c8c8c] text-[6px]">&lt;millions&gt;</text>
        <TimeLabels y={528} items={[['7:30', 660], ['8:00', 685], ['8:30', 711], ['9:00', 736], ['9:30', 761], ['10:00', 787], ['10:30', 812], ['11:00', 837], ['12:00', 888], ['12:30', 912]]} />
        <Tag x={854} y={525} w={17} fill="#b0b0b0" color="#222">11:20</Tag>
      </Chart>
      <Footer fourth={<Slash />} thumb="w-7" />
    </Panel>
  );
}

/* ---------- window ---------- */

function WindowButton({ label, path }: { label: string; path: string }) {
  return (
    <button type="button" aria-label={label} className="flex h-[7px] w-2 items-center justify-center border-r border-b border-[#404040] bg-[#d4d0c8] text-black">
      <svg viewBox="0 0 6 6" className="size-[5px]" fill="none" stroke="currentColor" aria-hidden="true"><path d={path} /></svg>
    </button>
  );
}

export default function App() {
  return (
    <div className="relative min-h-screen overflow-hidden bg-[#1c1c1c] font-['Open_Sans','Noto_Sans',sans-serif]">
      <header className="flex h-[9px] items-center bg-linear-to-r from-[#0a2a7a] to-[#a8ccf2] pr-1 pl-[1px]">
        <svg viewBox="0 0 8 8" className="size-2 shrink-0" aria-hidden="true">
          <path d="M0 0h8v8H0z" fill="#0c5c14" />
          <path d="M1 5l2-3 1 2 3-3M2 7l2-2 2 1" stroke="#40d840" fill="none" />
        </svg>
        <h1 className="ml-[1px] flex-1 text-[6px] leading-[9px] font-semibold text-white">PWR, PWR, PWR, PWR, SPY - Flexible Grid Main@thinkorswim [build 1878.33]</h1>
        <div className="flex gap-[1px]">
          <WindowButton label="Minimize" path="M1 5h4" />
          <WindowButton label="Restore" path="M2 1h3v3M1 2.500h3v3h-3z" />
          <WindowButton label="Close" path="M1 1l4 4M5 1l-4 4" />
        </div>
      </header>
      <div className="flex h-[11px] items-center border-t border-[#8a8a80] bg-[#4a4a4a]">
        <button type="button" className="ml-[2px] flex h-2 items-center gap-[2px] rounded-[2px] bg-[#0c0c0c] px-[2px] text-[6px] leading-[8px] text-[#d8d8d8]">
          <svg viewBox="0 0 8 8" className="size-2" aria-hidden="true">
            <path d="M1 1h2v4H1zM4 0h4v3H4zM1 6h3v2H1zM5 4h3v4H5z" fill="#58b8e8" />
          </svg>
          Flexible Grid
        </button>
        <span className="flex-1" />
        <Tool label="Add" className="w-[17px]"><Icon className="size-[6px]"><path d="M8 1v14M1 8h14" strokeWidth="3" /></Icon></Tool>
        <Tool label="Pin" className="w-[18px]"><Icon className="size-[6px]"><path d="M2 14l5-5M6 5l5 5M9 3l4 4-3 2-3-3z" strokeWidth="2.500" /></Icon></Tool>
        <Tool label="Menu" className="w-[18px]"><Menu /></Tool>
      </div>
      <main className="grid gap-y-[1px]">
        <div className="grid grid-cols-[741fr_219fr]">
          <MainPanel />
          <FiveMinutePanel />
        </div>
        <div className="grid grid-cols-3">
          <DailyPanel />
          <WeekPanel />
          <SpyPanel />
        </div>
      </main>
      <div className="pointer-events-none absolute right-[11px] bottom-0 font-['Liberation_Sans',sans-serif] text-[26px] leading-[27px] text-[#4468c8]">hamaha.net</div>
    </div>
  );
}
